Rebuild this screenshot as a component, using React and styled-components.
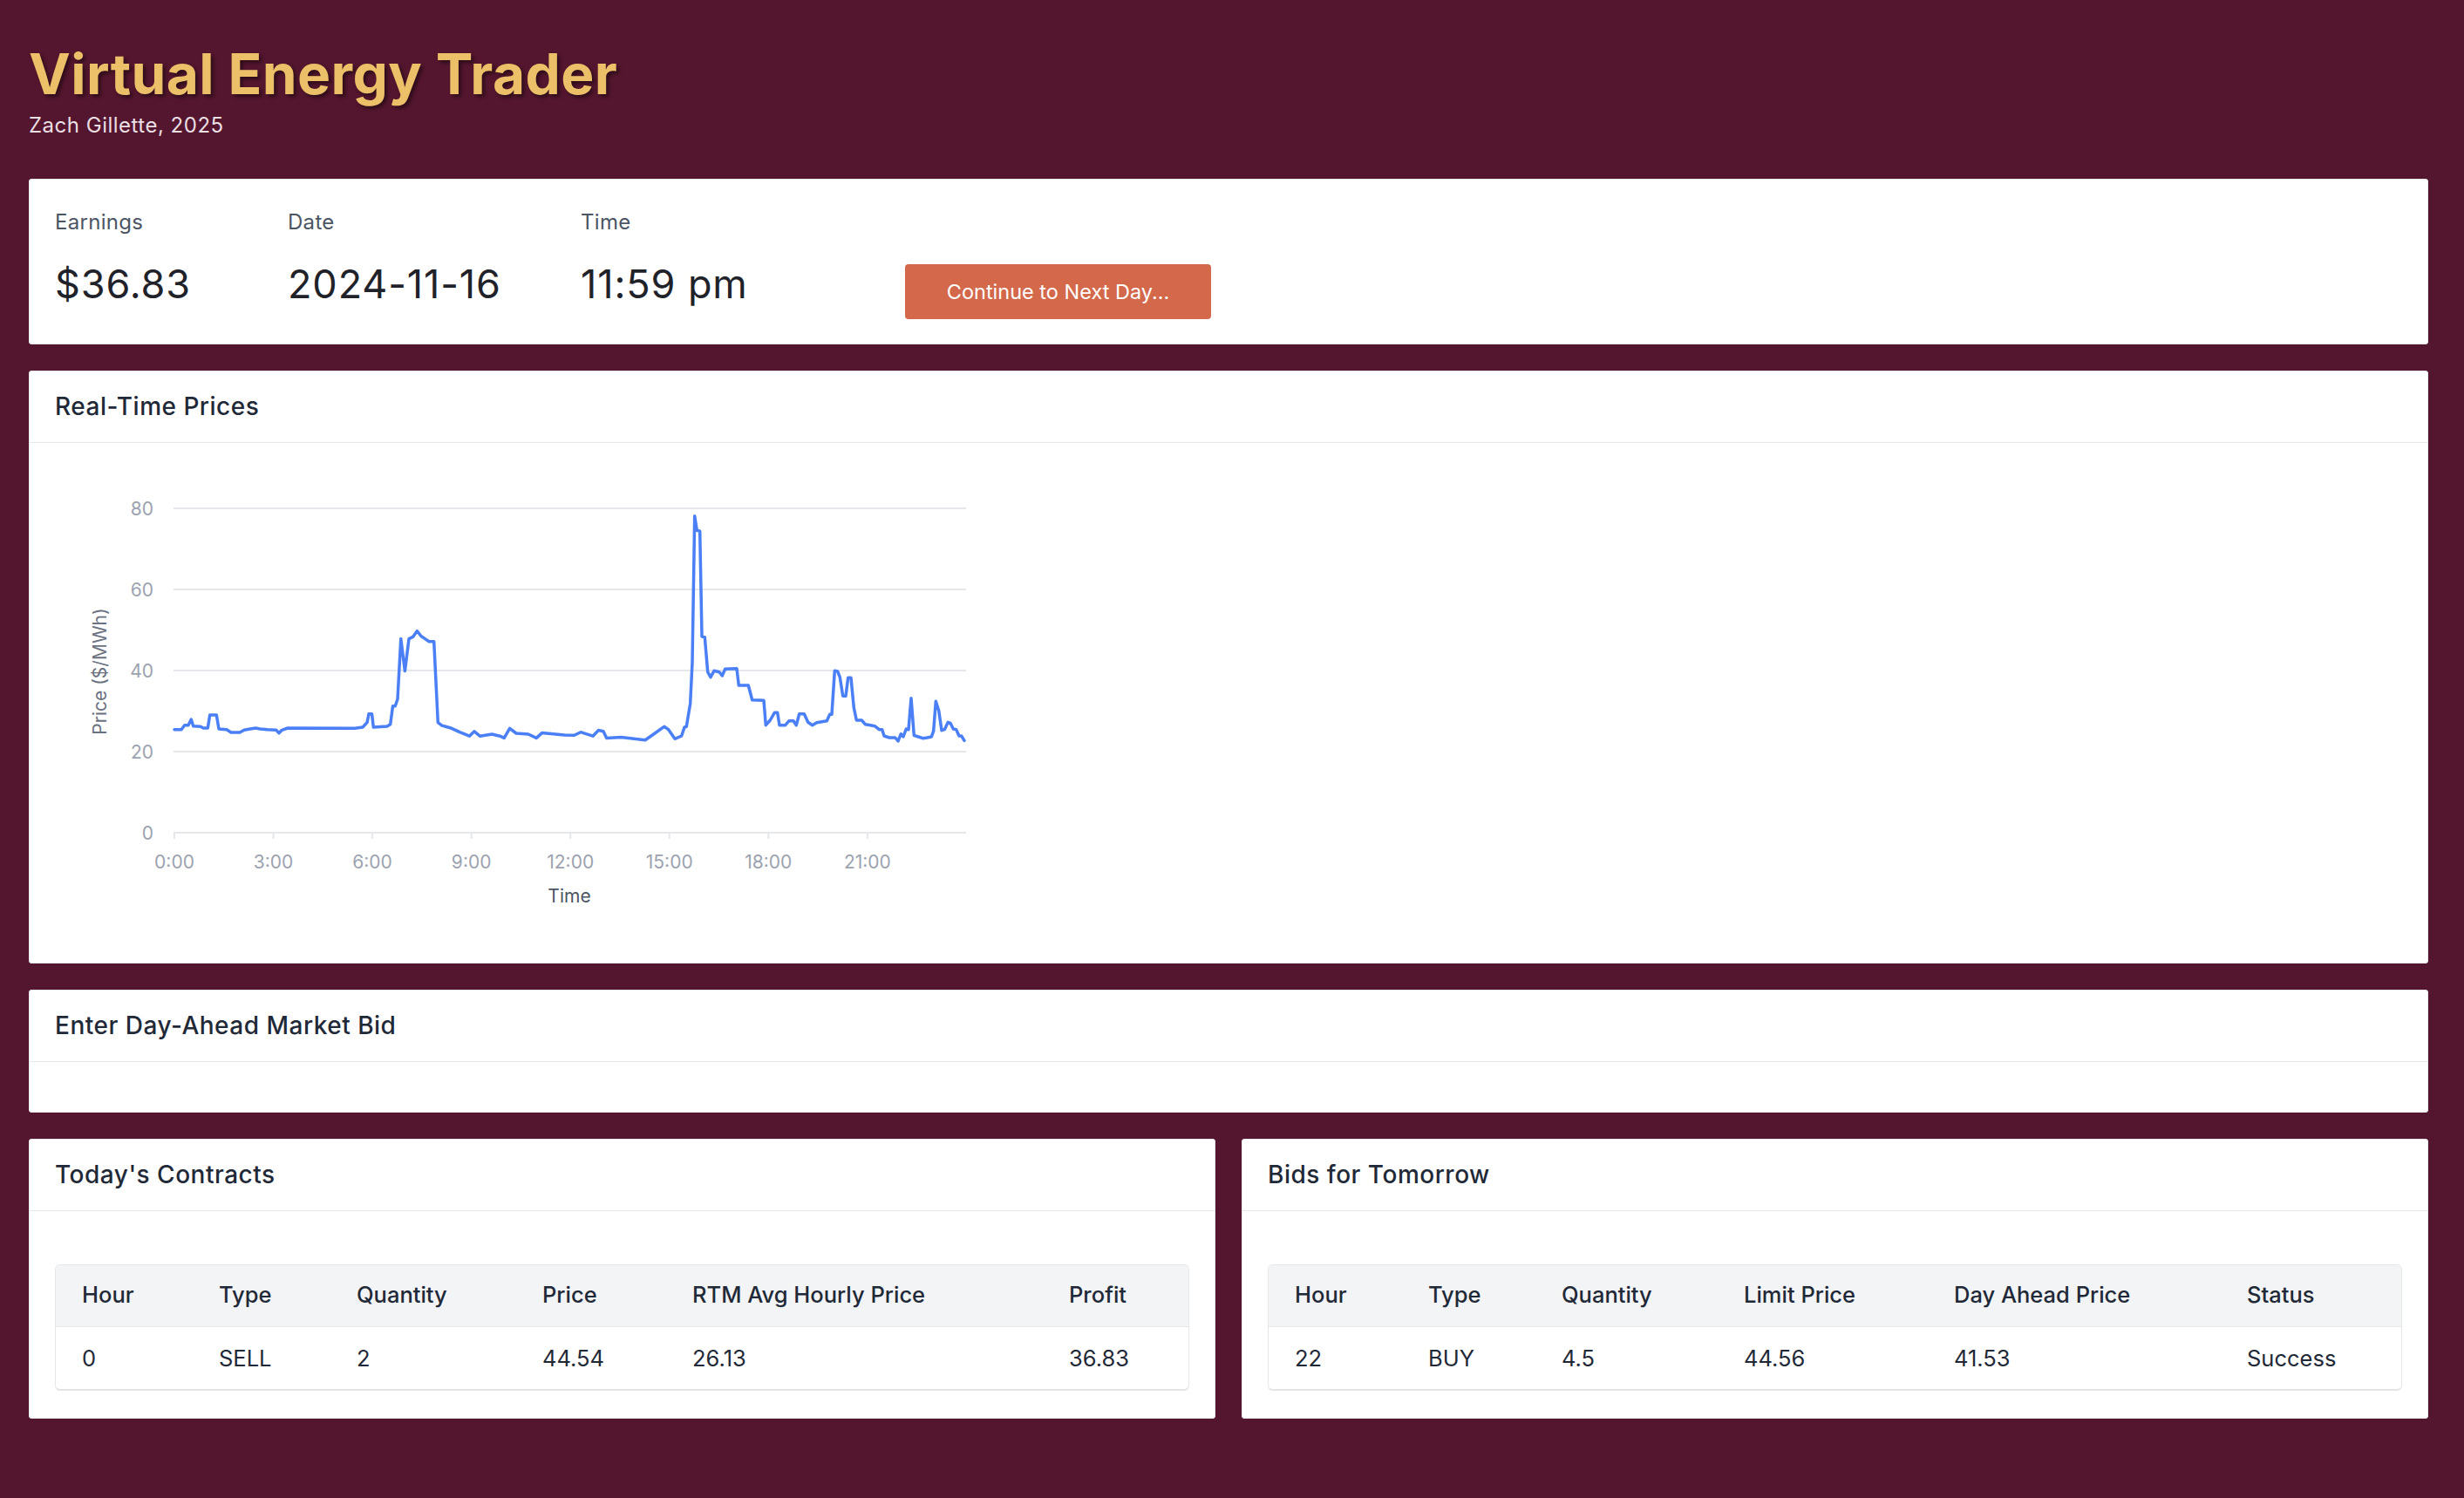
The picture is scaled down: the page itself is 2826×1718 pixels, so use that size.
import React from 'react'
import styled, { createGlobalStyle } from 'styled-components'

const GlobalStyle = createGlobalStyle`
  * { box-sizing: border-box; }
  body {
    margin: 0;
    background: #54162e;
    font-family: Inter, "Noto Sans", sans-serif;
    color: #1f2937;
  }
`;

const Page = styled.div`
  min-height: 100vh;
  padding: 47px 41px 60px 33px;
  display: flex;
  flex-direction: column;
`;

const Title = styled.h1`
  margin: 0;
  font-size: 64px;
  line-height: 1.2;
  font-weight: 700;
  letter-spacing: 0.4px;
  color: #ecc068;
  text-shadow: 3px 3px 4px rgba(0, 0, 0, 0.45);
`;

const Subtitle = styled.p`
  margin: 2px 0 0;
  font-size: 24px;
  line-height: 1.5;
  letter-spacing: 0.5px;
  color: #eadfe3;
`;

const Stack = styled.div`
  margin-top: 43px;
  display: flex;
  flex-direction: column;
  gap: 30px;
`;

const Card = styled.section`
  background: #fff;
  border-radius: 4px;
  box-shadow: inset 0 0 0 1px #e5e7eb;
  overflow: hidden;
`;

const CardHeader = styled.div`
  height: 83px;
  padding: 2px 30px 0;
  display: flex;
  align-items: center;
  border-bottom: 1px solid #e5e7eb;
`;

const CardTitle = styled.h2`
  margin: 0;
  font-size: 28px;
  line-height: 35px;
  font-weight: 500;
  letter-spacing: 0.5px;
  color: #1f2937;
`;

const CardBody = styled.div`
  padding: ${p => p.$pad || '30px'};
`;

const StatsRow = styled.div`
  display: flex;
  align-items: flex-end;
  padding: 32px 30px 29px;
`;

const Stat = styled.div`
  width: ${p => p.$w}px;
  padding-bottom: 13px;
`;

const StatLabel = styled.div`
  font-size: 24px;
  line-height: 36px;
  letter-spacing: 0.3px;
  color: #4b5563;
`;

const StatValue = styled.div`
  margin-top: 26px;
  font-size: 45px;
  line-height: 54px;
  letter-spacing: 0.9px;
  color: #1f2329;
`;

const NextButton = styled.button`
  width: 351px;
  height: 63px;
  border: none;
  border-radius: 4px;
  background: #d3684a;
  color: #fff;
  font-family: inherit;
  font-size: 23.5px;
  cursor: pointer;
`;

const BottomRow = styled.div`
  display: grid;
  grid-template-columns: 1fr 1fr;
  gap: 30px;
`;

const TableWrap = styled.div`
  margin-top: 31px;
  border: 1px solid #e5e7eb;
  border-bottom: 2px solid #e3e4e8;
  border-radius: 6px;
  overflow: hidden;
`;

const Table = styled.table`
  width: 100%;
  table-layout: fixed;
  border-collapse: collapse;
  font-size: 25.5px;
`;

const Th = styled.th`
  height: 71px;
  padding: 0 30px 3px;
  text-align: left;
  font-weight: 500;
  color: #1f2937;
  background: #f3f4f6;
  border-bottom: 1px solid #e5e7eb;
  white-space: nowrap;
`;

const Td = styled.td`
  height: 71px;
  padding: 0 30px;
  color: #1f2937;
  white-space: nowrap;
`;

const TickText = styled.text`
  font-family: Inter, sans-serif;
  font-size: 21px;
  fill: ${p => p.$fill || '#9ca3af'};
`;

const priceTrace = [
  [200, 836.7], [208, 836.7], [211.7, 831.7], [216, 831.7], [219.3, 825], [221.7, 832.7],
  [230, 833.3], [233.3, 835], [238.3, 835], [240.7, 820], [248.3, 820], [251, 836],
  [260, 836.7], [265, 840], [275, 840], [280, 837.3], [286.7, 836], [293.3, 835],
  [298.3, 836], [306.7, 836.7], [316.7, 837.3], [320, 840.7], [323.3, 837.3], [330, 835],
  [407, 835.3], [416, 834], [421, 828.6], [423, 818.8], [426.5, 818.8], [428.3, 834],
  [444, 833], [447.7, 830.8], [450.5, 809.8], [453.3, 809.8], [456, 801.8], [459.8, 732.6],
  [464.4, 769.6], [469, 732.6], [473.6, 730.4], [478.3, 723.7], [482.9, 729.5], [487.5, 732.6],
  [492.1, 735.7], [497.7, 735.7], [502.3, 828.6], [506.9, 832.1], [518, 835.3], [527.3, 839.7],
  [538.4, 844.2], [544, 838.8], [550.4, 844.2], [564.3, 842], [573.5, 844.2], [578.2, 846.4],
  [584.6, 835.3], [592, 841], [606, 842], [615.2, 846.4], [621.6, 840.6], [647.5, 842.9],
  [658.6, 843.3], [666, 839.7], [680, 844.2], [686.4, 837.5], [692, 838.8], [695.7, 846.4],
  [712.3, 845.5], [740, 848.7], [750, 841.7], [761.7, 833.3], [766.7, 836.7], [774, 847.3],
  [781.7, 844], [785, 834], [787.3, 833.3], [791.7, 806.7], [794, 760], [796.7, 591.7],
  [799.3, 608.3], [802.7, 609.3], [805, 730], [808.3, 730.7], [811.7, 770.7], [815, 776.7],
  [819, 769.3], [825, 770.7], [828.3, 775], [831.7, 767.3], [845, 766.7], [847.3, 786],
  [858.3, 786], [862.7, 802.7], [876, 803.3], [878.3, 831.7], [883.3, 826], [888.3, 817.3],
  [891.7, 817.3], [894, 831.7], [900.7, 831.7], [905, 826.7], [910, 826.7], [913.3, 831.7],
  [916.7, 818.7], [922.3, 818.7], [926.7, 828.3], [931.7, 831.7], [936.7, 828.7], [948.3, 826.7],
  [951.7, 819.3], [954, 819.3], [957.3, 769.3], [960.7, 770], [963.3, 776.7], [966.7, 798.3],
  [970, 798.3], [972.7, 777.3], [976, 777.3], [979.3, 811.7], [982.3, 826], [988.3, 826],
  [992.3, 830.7], [998.3, 831.7], [1003.3, 832.7], [1008.3, 836.7], [1011.7, 836.7], [1014, 844],
  [1020, 846], [1026.7, 846], [1030, 850], [1033.3, 841.7], [1036, 845], [1039.3, 836],
  [1042, 836.7], [1045, 800.7], [1048.3, 843.3], [1053.3, 845], [1058.3, 846.7], [1063.3, 846],
  [1068.3, 845], [1070.7, 838.3], [1073.3, 804.3], [1076.7, 815], [1080, 837.7], [1083.3, 836.7],
  [1087.3, 828.3], [1090, 829.3], [1093.3, 836], [1096.7, 836.7], [1100, 844], [1102.7, 844],
  [1106, 849.3],
];

const yTicks = [0, 20, 40, 60, 80];
const xTicks = ['0:00', '3:00', '6:00', '9:00', '12:00', '15:00', '18:00', '21:00'];
const yFor = v => 955 - v * 4.65;

const PriceChart = () => (
  <svg width="1080" height="537" viewBox="63 538 1080 537" style={{ display: 'block' }}>
    {yTicks.map(v => (
      <g key={v}>
        <line x1="199" x2="1108" y1={yFor(v)} y2={yFor(v)} stroke="#e5e7eb" strokeWidth="2" />
        <TickText x="176" y={yFor(v)} textAnchor="end" dominantBaseline="central">{v}</TickText>
      </g>
    ))}
    {xTicks.map((t, i) => {
      const x = 200 + i * 113.55
      return (
        <g key={t}>
          <line x1={x} x2={x} y1="955" y2="962" stroke="#e5e7eb" strokeWidth="2" />
          <TickText x={x} y="988" textAnchor="middle" dominantBaseline="central">{t}</TickText>
        </g>
      )
    })}
    <TickText x="653" y="1027" textAnchor="middle" dominantBaseline="central" $fill="#4b5563">Time</TickText>
    <TickText
      x="114" y="770" textAnchor="middle" dominantBaseline="central" $fill="#6b7280"
      transform="rotate(-90 114 770)"
    >
      Price ($/MWh)
    </TickText>
    <polyline
      points={priceTrace.map(p => p.join(',')).join(' ')}
      fill="none" stroke="#4a7ff5" strokeWidth="3.5" strokeLinejoin="round" strokeLinecap="round"
    />
  </svg>
);

const DataTable = ({ widths, headers, rows }) => (
  <TableWrap>
    <Table>
      <colgroup>
        {widths.map((w, i) => <col key={i} style={{ width: w }} />)}
      </colgroup>
      <thead>
        <tr>{headers.map(h => <Th key={h}>{h}</Th>)}</tr>
      </thead>
      <tbody>
        {rows.map((r, i) => (
          <tr key={i}>{r.map((c, j) => <Td key={j}>{c}</Td>)}</tr>
        ))}
      </tbody>
    </Table>
  </TableWrap>
);

const App = () => {
  return (
    <>
      <GlobalStyle />
      <Page>
        <Title>Virtual Energy Trader</Title>
        <Subtitle>Zach Gillette, 2025</Subtitle>
        <Stack>
          <Card>
            <StatsRow>
              <Stat $w={267}>
                <StatLabel>Earnings</StatLabel>
                <StatValue>$36.83</StatValue>
              </Stat>
              <Stat $w={336}>
                <StatLabel>Date</StatLabel>
                <StatValue>2024-11-16</StatValue>
              </Stat>
              <Stat $w={372}>
                <StatLabel>Time</StatLabel>
                <StatValue>11:59 pm</StatValue>
              </Stat>
              <NextButton>Continue to Next Day...</NextButton>
            </StatsRow>
          </Card>

          <Card>
            <CardHeader><CardTitle>Real-Time Prices</CardTitle></CardHeader>
            <CardBody>
              <PriceChart />
            </CardBody>
          </Card>

          <Card>
            <CardHeader><CardTitle>Enter Day-Ahead Market Bid</CardTitle></CardHeader>
            <CardBody $pad="29px 30px" />
          </Card>

          <BottomRow>
            <Card>
              <CardHeader><CardTitle>Today's Contracts</CardTitle></CardHeader>
              <CardBody $pad="30px 30px 32px">
                <DataTable
                  widths={[157, 158, 213, 172, 432, 169]}
                  headers={['Hour', 'Type', 'Quantity', 'Price', 'RTM Avg Hourly Price', 'Profit']}
                  rows={[['0', 'SELL', '2', '44.54', '26.13', '36.83']]}
                />
              </CardBody>
            </Card>
            <Card>
              <CardHeader><CardTitle>Bids for Tomorrow</CardTitle></CardHeader>
              <CardBody $pad="30px 30px 32px">
                <DataTable
                  widths={[153, 153, 209, 241, 336, 209]}
                  headers={['Hour', 'Type', 'Quantity', 'Limit Price', 'Day Ahead Price', 'Status']}
                  rows={[['22', 'BUY', '4.5', '44.56', '41.53', 'Success']]}
                />
              </CardBody>
            </Card>
          </BottomRow>
        </Stack>
      </Page>
    </>
  )
}

export default App
